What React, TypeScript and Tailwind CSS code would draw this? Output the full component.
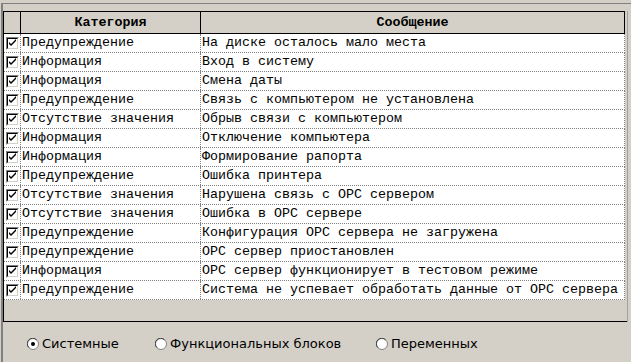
import React from "react";

const rows: [string, string][] = [
  ["Предупреждение", "На диске осталось мало места"],
  ["Информация", "Вход в систему"],
  ["Информация", "Смена даты"],
  ["Предупреждение", "Связь с компьютером не установлена"],
  ["Отсутствие значения", "Обрыв связи с компьютером"],
  ["Информация", "Отключение компьютера"],
  ["Информация", "Формирование рапорта"],
  ["Предупреждение", "Ошибка принтера"],
  ["Отсутствие значения", "Нарушена связь с OPC сервером"],
  ["Отсутствие значения", "Ошибка в OPC сервере"],
  ["Предупреждение", "Конфигурация OPC сервера не загружена"],
  ["Предупреждение", "OPC сервер приостановлен"],
  ["Информация", "OPC сервер функционирует в тестовом режиме"],
  ["Предупреждение", "Система не успевает обработать данные от OPC сервера"],
];

const CheckBox = () => (
  <div className="w-[13px] h-[13px] border-t border-l border-[#808080] border-r border-b border-r-white border-b-white">
    <div className="w-full h-full border-t border-l border-black border-r border-b border-r-[#d4d0c8] border-b-[#d4d0c8] bg-white">
      <svg width="9" height="9" viewBox="0 0 9 9" className="block">
        <path d="M1 3v2l2 2 5-5V0L3 5z" fill="#000" />
      </svg>
    </div>
  </div>
);

const Radio = ({ checked, label }: { checked?: boolean; label: string }) => (
  <div className="flex items-center gap-[3px]">
    <svg width="12" height="12" viewBox="0 0 12 12">
      <circle cx="6" cy="6" r="5.5" fill="#fff" stroke="#808080" />
      <path d="M1.8 9.5A5 5 0 0 1 9.5 1.8" stroke="#404040" fill="none" />
      {checked && <circle cx="6" cy="6" r="2" fill="#000" />}
    </svg>
    <span className="text-[13px] text-black font-['DejaVu_Sans',sans-serif]">{label}</span>
  </div>
);

export default function App() {
  return (
    <div className="w-[631px] h-[362px] bg-[#d4d0c8] pt-[3px] overflow-hidden font-['Liberation_Sans',sans-serif]">
      <div className="h-[359px] border-t border-l-2 border-[#808080] ml-[1px] flex flex-col">
        <div className="pt-[7px] flex">
          <div className="h-[311px] flex-1 border-l border-b border-black font-['Liberation_Mono',monospace] text-[13.33px] text-black">
            <div className="w-[621px] border-t border-b border-r border-black flex h-[23px] bg-[#d4d0c8] font-bold">
              <div className="w-[17px] border-r border-black" />
              <div className="w-[180px] border-r border-black flex items-center justify-center">Категория</div>
              <div className="flex-1 flex items-center justify-center">Сообщение</div>
            </div>
            <div className="w-[621px]">
              {rows.map(([cat, msg], i) => (
                <div key={i} className="flex h-[19px] bg-white border-b border-r border-dotted border-[#808080]">
                  <div className="w-[17px] border-r border-dotted border-[#808080] flex items-center justify-end pr-[1px]">
                    <CheckBox />
                  </div>
                  <div className="w-[180px] border-r border-dotted border-[#808080] flex items-center pl-[1px] whitespace-nowrap">{cat}</div>
                  <div className="flex-1 flex items-center pl-[1px] whitespace-nowrap">{msg}</div>
                </div>
              ))}
            </div>
          </div>
          <div className="w-[1px] mr-[3px] bg-[#a0a0a0]" />
        </div>
        <div className="flex items-center h-[40px] pt-[4px] pl-[24px]">
          <div className="w-[128px]"><Radio checked label="Системные" /></div>
          <div className="w-[221px]"><Radio label="Функциональных блоков" /></div>
          <Radio label="Переменных" />
        </div>
      </div>
    </div>
  );
}
